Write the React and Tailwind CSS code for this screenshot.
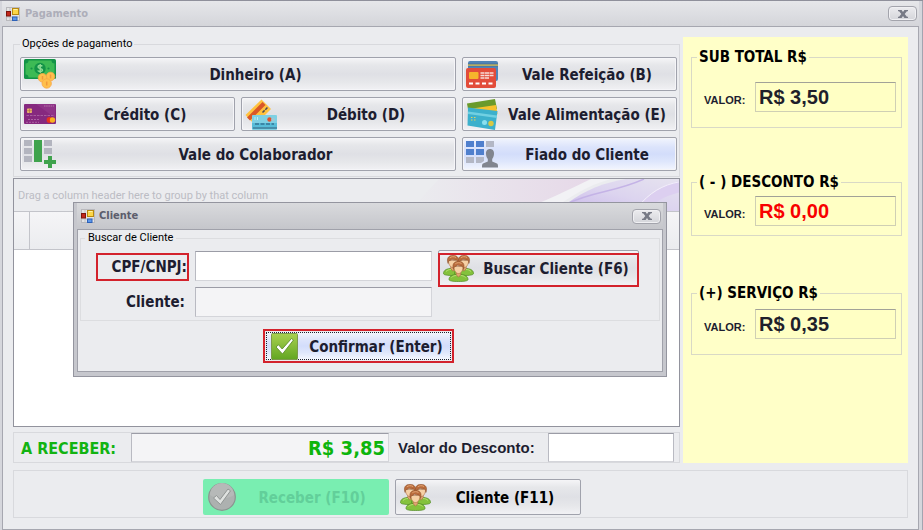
import React from "react";

const UI = "font-['DejaVu_Sans_Condensed','Noto_Sans',sans-serif]";
const SMALL = "font-['Roboto','Noto_Sans',sans-serif]";
const ARIAL = "font-['Liberation_Sans',Arial,sans-serif]";
const FACE =
  "bg-[linear-gradient(to_bottom,#f5f5f7_0%,#e6e7ea_22%,#dfe0e5_50%,#e6e7ea_75%,#f1f1f4_100%)]";
const FACE_BLUE =
  "bg-[linear-gradient(to_bottom,#f2f5fd_0%,#dce4fb_28%,#d3ddfb_50%,#dfe7fc_75%,#f3f6fe_100%)]";
const CAPTION = "flex-1 whitespace-nowrap pl-1 pt-0.5 text-center text-[15px] font-bold leading-5";

function FormIcon() {
  return (
    <svg width="14" height="14" viewBox="0 0 14 14" aria-hidden="true">
      <rect x="0.5" y="0.5" width="13" height="13" fill="#e4e4e4" stroke="#b9b9bd" />
      <path d="M1 10h12M4 1v12" stroke="#bfc0c6" />
      <rect x="0.5" y="4.5" width="4" height="4.5" fill="#c3281c" stroke="#7d150e" />
      <rect x="6.5" y="1.5" width="6" height="6" fill="#fbd648" stroke="#b98a10" />
      <rect x="6.5" y="10" width="4.5" height="3.5" fill="#5d97ea" stroke="#2d61b8" />
      <path d="M7.5 2.5h4" stroke="#fff1a8" />
    </svg>
  );
}

function CloseButton() {
  return (
    <button
      type="button"
      aria-label="Fechar"
      className="flex h-[15px] w-[29px] items-center justify-center rounded-sm border border-[#a3a4ac] bg-linear-to-b from-[#ececef] to-[#d4d5da] shadow-[inset_0_0_0_1px_#f0f0f3]"
    >
      <svg width="10" height="8" viewBox="0 0 10 8" aria-hidden="true">
        <path d="M0 0h3.6l1.4 1.9L6.4 0H10v1.2H8.9L6.7 4l2.2 2.8H10V8H6.4L5 6.1 3.6 8H0V6.8h1.1L3.3 4 1.1 1.2H0z" fill="#777a86" />
      </svg>
    </button>
  );
}

function MoneyIcon() {
  return (
    <svg width="32" height="30" viewBox="0 0 32 30" aria-hidden="true">
      <rect width="32" height="20" rx="1.5" fill="#139347" />
      <path d="M4.500 1.500h23a3 3 0 0 0 3 3v11a3 3 0 0 0-3 3h-23a3 3 0 0 0-3-3v-11a3 3 0 0 0 3-3z" fill="#3dba55" />
      <circle cx="16" cy="9.500" r="5.700" fill="#139347" />
      <path d="M18.300 7.300c-.6-1.100-4.300-1.400-4.300.6 0 2.100 4.500 1 4.500 3.200 0 2-4 1.800-4.800.4M16.200 5v9" fill="none" stroke="#8fdc95" strokeWidth="1.400" />
      <circle cx="7.500" cy="9.500" r="1.100" fill="#139347" />
      <circle cx="24.500" cy="9.500" r="1.100" fill="#139347" />
      <g fill="#ffc04c" stroke="#f7a646" strokeWidth=".8">
        <circle cx="26.500" cy="17.500" r="4.300" />
        <circle cx="18.500" cy="18.800" r="4.300" />
        <circle cx="22.700" cy="24.500" r="4.700" />
      </g>
      <path d="M26.500 15.500v4M18.500 17v3.500M22.700 22.500v4" stroke="#f19a3c" strokeWidth="1.500" />
    </svg>
  );
}

function PurpleCardIcon() {
  return (
    <svg width="32" height="20" viewBox="0 0 32 20" aria-hidden="true">
      <rect width="32" height="20" rx="1" fill="#86297f" />
      <path d="M12 0h19v14z" fill="#8f3488" />
      <rect x="3" y="4.500" width="5" height="4.500" rx=".8" fill="#e9b36d" />
      <path d="M3 6.700h5M5.500 4.500V9" stroke="#a66b3d" strokeWidth=".6" />
      <path d="M20 2h10" stroke="#b675a9" strokeWidth="1.200" strokeDasharray="1.500 .7" />
      <path d="M2.500 11.500h28" stroke="#a75d9f" strokeWidth="1" strokeDasharray="2.500 1" />
      <path d="M4 15.500h12M2 18.300h13" stroke="#b06aa8" strokeWidth=".9" strokeDasharray="2 1" />
      <circle cx="25.500" cy="16" r="2.900" fill="#e6331f" />
      <circle cx="28.500" cy="16" r="2.700" fill="#f9b21f" />
    </svg>
  );
}

function DebitIcon() {
  return (
    <svg width="32" height="31" viewBox="0 0 32 31" aria-hidden="true">
      <path d="M.5 16 16.500.5l9.500 9.500L10 26z" fill="#ffc23f" />
      <path d="M2 18.500 17.500 3l3 3L5 21.500z" fill="#d95728" />
      <path d="m17.500 13.500 5-5" stroke="#4b4a54" strokeWidth="1.500" strokeDasharray="3 1" />
      <rect x="7" y="16" width="25" height="15" rx="1" fill="#7fd0e3" />
      <path d="M7 24h25v6H7z" fill="#57bcd8" />
      <path d="M10 18v3M12.500 18v3" stroke="#b9ecf5" />
      <circle cx="24.500" cy="20.500" r="2.200" fill="#e3502b" />
      <circle cx="28" cy="20.500" r="1.800" fill="#9fc7d4" />
      <path d="M10 25h19" stroke="#225173" strokeWidth="1.200" strokeDasharray="4 1.500" />
      <path d="M8 29h24" stroke="#38607c" />
    </svg>
  );
}

function MealCardIcon() {
  return (
    <svg width="32" height="27" viewBox="0 0 32 27" aria-hidden="true">
      <rect x="2" width="30" height="20" rx="2" fill="#4f84b6" />
      <rect x="2" y="2.500" width="30" height="3" fill="#45719c" />
      <rect x="2" y="3.500" width="30" height="1.200" fill="#e9c94a" />
      <rect y="7" width="30" height="20" rx="2" fill="#e24c3a" />
      <rect x="3" y="11" width="9.500" height="7" rx="1" fill="#f6b52c" />
      <path d="M14.500 12h13M14.500 14.500h13M14.500 17h9" stroke="#f7dcd8" strokeWidth="1.500" strokeDasharray="4 .5" />
      <path d="M3 22.500h24" stroke="#fff" strokeWidth="1.800" strokeDasharray="4 2.500" />
    </svg>
  );
}

function FoodCardIcon() {
  return (
    <svg width="31" height="31" viewBox="0 0 31 31" aria-hidden="true">
      <path d="M0 4.500 28 0l2 10L2 16z" fill="#6a9a2b" />
      <path d="M2 10 29 6l1.500 9L4 19z" fill="#f6c12c" />
      <path d="M1 8.500 30.500 12 28 31 .5 26.500z" fill="#3cb0cc" />
      <path d="m1 12.500 29 4v2.500L1 15z" fill="#71d0e2" />
      <path d="M4 18.500h6M4 21h5" stroke="#e8d15a" strokeWidth="1.200" strokeDasharray="1.500 1.500" />
      <circle cx="17.500" cy="23.500" r="2.500" fill="#8be0ee" />
      <circle cx="24" cy="24.500" r="2.700" fill="#d8c743" />
    </svg>
  );
}

function ColumnPlusIcon() {
  return (
    <svg width="32" height="28" viewBox="0 0 32 28" aria-hidden="true">
      <path d="M0 0h8v6H0zM0 8h8v6H0zM0 16h8v6H0zM20 0h8v6h-8zM20 8h8v6h-8z" fill="#b3b5bf" />
      <path d="M10 0h8v22h-8zM24 16h4v4h4v4h-4v4h-4v-4h-4v-4h4z" fill="#3fa34d" />
    </svg>
  );
}

function GridPersonIcon() {
  return (
    <svg width="32" height="27" viewBox="0 0 32 27" aria-hidden="true">
      <path d="M0 0h8v6H0zM10 0h8v6h-8zM0 8h8v6H0zM10 8h8v6h-8z" fill="#4f7fcd" />
      <path d="M20 0h8v6h-8zM0 16h8v6H0zM10 16h8v4l-3 2h-5z" fill="#b3b7c5" />
      <path d="M24 8c3 0 4.200 2.300 4 5-.1 2-1 4-1.800 5v2.500L31 22.500c1 .6 1 2 1 4H16c0-2 0-3.400 1-4l4.800-2V18c-.9-1-1.700-3-1.800-5-.2-2.700 1-5 4-5z" fill="#81858f" />
    </svg>
  );
}

function Person({ x, y }) {
  return (
    <g transform={`translate(${x} ${y})`}>
      <path d="M0 18.500c0-3 2.500-4.500 6.500-5h6c4 .5 6.500 2 6.500 5 0 1.500-4 2-9.500 2S0 20 0 18.500z" fill="#84c23c" stroke="#4f8a22" strokeWidth=".7" />
      <path d="M2.500 16.500c1.500-1.500 3-2 5-2M11.500 14.500c2 0 3.500.5 5 2" fill="none" stroke="#b6e070" />
      <path d="M7.200 10.500h4.600v3.200l-2.300 2.500-2.300-2.500z" fill="#dfa572" stroke="#9b6437" strokeWidth=".5" />
      <path d="M5 5.500h9c.3 3-1.500 7-4.500 7s-4.800-4-4.500-7z" fill="#f6d0a4" stroke="#a5683a" strokeWidth=".5" />
      <path d="M4.600 8.500C2.500 3 5.500.3 9.500.3s7 2.700 4.900 8.200c-.2-1.800-.7-3-1.400-3.600-1.500.3-3 .1-4.500-.6-.8.9-2.200 1.200-3 1.400-.6.900-.8 1.700-.9 2.800z" fill="#b96c3d" stroke="#874a24" strokeWidth=".5" />
      <path d="M6.300 2.800C8 1.500 10.500 1.300 12.500 2.500" fill="none" stroke="#e3a674" />
    </g>
  );
}

function PeopleIcon() {
  return (
    <svg width="31" height="27" viewBox="0 0 31 27" aria-hidden="true">
      <Person x={0.500} y={0} />
      <Person x={11.500} y={0} />
      <Person x={6} y={6} />
    </svg>
  );
}

function CheckSquareIcon() {
  return (
    <svg width="27" height="27" viewBox="0 0 27 27" aria-hidden="true">
      <defs>
        <linearGradient id="sq" x1="0" y1="0" x2="0" y2="1">
          <stop offset="0" stopColor="#a9d150" />
          <stop offset="1" stopColor="#62a622" />
        </linearGradient>
      </defs>
      <rect x=".5" y=".5" width="26" height="26" rx="1" fill="url(#sq)" stroke="#7d9a4c" />
      <path d="m5 14 2.500-2.200 3.700 4.200L20.500 5.500l2 1.500L11.500 21z" fill="#fff" stroke="#5d8f2c" strokeWidth=".9" />
    </svg>
  );
}

function CheckCircleIcon() {
  return (
    <svg width="28" height="28" viewBox="0 0 28 28" aria-hidden="true">
      <circle cx="14" cy="14" r="13.300" fill="#adb1b0" stroke="#8b9490" strokeWidth="1.200" />
      <path d="M2 12a12 12 0 0 1 24 0c-6 4-17 5-24 0z" fill="#b6b9b8" />
      <path d="m5.500 15 3-2.500 3.500 4L20 6l2.500 1.800L12.500 21.500z" fill="#dfe2e0" stroke="#8a8f8d" strokeWidth=".9" />
    </svg>
  );
}

function PayButton({ icon, label, className = "", active = false }) {
  return (
    <button
      type="button"
      className={`flex h-[34px] items-center rounded-xs border border-[#a0a2ac] pl-[3px] pr-1 shadow-[inset_0_0_0_1px_#f5f5f8] ${active ? FACE_BLUE : FACE} ${className}`}
    >
      <span className="flex w-8 shrink-0 justify-center">{icon}</span>
      <span className={CAPTION}>{label}</span>
    </button>
  );
}

function Total({ legend, value, id, color = "text-[#1f1f2b]", className }) {
  return (
    <fieldset className={`rounded-none border border-[#d9d9c6] pl-3 pr-[5px] ${className}`}>
      <legend className="-ml-[7px] px-0.5 text-[15px] font-bold leading-5 text-black">{legend}</legend>
      <div className={`flex items-center justify-between ${ARIAL}`}>
        <label htmlFor={id} className="pt-1.5 text-[11px] font-bold leading-4">VALOR:</label>
        <input
          id={id}
          readOnly
          defaultValue={value}
          className={`h-[30px] w-[141px] border border-[#cfcfb4] border-t-[#a2a298] bg-[#ffffc4] px-[3px] text-[20px] font-bold outline-none ${color}`}
        />
      </div>
    </fieldset>
  );
}

function Swirl() {
  return (
    <svg className="absolute right-0 top-0 h-full w-[300px]" viewBox="0 0 300 33" preserveAspectRatio="none" aria-hidden="true">
      <defs>
        <linearGradient id="pink" x1="0" x2="1">
          <stop offset="0" stopColor="#ebecef" />
          <stop offset="1" stopColor="#e6d8e8" />
        </linearGradient>
        <linearGradient id="violet" x1="0" y1="1" x2="1" y2="0">
          <stop offset="0" stopColor="#c9b8ea" />
          <stop offset=".5" stopColor="#dcd4ef" />
          <stop offset="1" stopColor="#e6e3ef" />
        </linearGradient>
      </defs>
      <path d="M60 0h155L150 33H30z" fill="url(#pink)" />
      <path d="M170 33C195 17 205 8 232 0h-20c-20 10-50 25-72 33z" fill="#f2f2f5" />
      <path d="M187 26C208 10 225 4 247 0h53v33H180z" fill="url(#violet)" />
      <path d="M187 26C215 12 235 14 265 0" fill="none" stroke="#c4b3e6" strokeWidth="1.500" />
      <path d="M260 28c12-14 24-22 40-26v12c-14 4-24 8-30 19z" fill="#dccff0" />
      <path d="M258 30c12-16 26-24 42-27" fill="none" stroke="#f3effa" />
    </svg>
  );
}

function ClientDialog() {
  return (
    <section
      role="dialog"
      aria-label="Cliente"
      className="absolute left-[73px] top-[201px] w-[594px] border border-[#94959f] bg-[#c6c7cd] px-[3px] pb-1"
    >
      <header className="flex h-[26px] items-center gap-1 bg-linear-to-b from-[#d9dadd] to-[#c5c6cb] pl-1 pr-0.5">
        <FormIcon />
        <h2 className="flex-1 text-[11px] font-bold leading-4 text-[#5c5d6c]">Cliente</h2>
        <CloseButton />
      </header>
      <div className="border border-[#a0a1aa] bg-[#ebecef] px-0.5 pb-2 pt-px">
        <fieldset className="flex border border-[#dcdde0] pb-[3px] pl-2">
          <legend className={`-ml-1 px-[3px] text-[11px] leading-[14px] text-black ${SMALL}`}>Buscar de Cliente</legend>
          <div className="grid flex-1 grid-cols-[100px_237px_201px] gap-x-1.5 gap-y-1.5 pt-1.5">
            <label htmlFor="cpf" className="flex h-7 w-[93px] items-center justify-end self-end justify-self-end border-2 border-[#d3222c] text-[15px] font-bold leading-6">
              CPF/CNPJ:
            </label>
            <input id="cpf" className="h-[30px] border border-[#d4d5da] border-l-[#b9bac2] border-t-[#9b9ca6] bg-white px-1 outline-none" />
            <div className="relative h-[30px]">
              <button
                type="button"
                className={`-mt-px flex h-9 w-full items-center rounded-xs border border-[#a0a2ac] pl-1 pr-1 ${FACE}`}
              >
                <PeopleIcon />
                <span className={CAPTION}>Buscar Cliente (F6)</span>
              </button>
              <span className="pointer-events-none absolute inset-x-0 top-0.5 h-[34px] border-2 border-[#d3222c]" />
            </div>
            <label htmlFor="cli" className="self-center pr-1 text-right text-[15px] font-bold leading-6">Cliente:</label>
            <input id="cli" readOnly className="h-[30px] border border-[#d4d5da] border-l-[#b9bac2] border-t-[#9b9ca6] bg-[#f4f4f6] px-1 outline-none" />
          </div>
        </fieldset>
        <div className="flex pl-[183px] pt-2">
          <div className="border-2 border-[#d3222c] p-px">
            <button
              type="button"
              className={`flex h-7 w-[185px] items-center border border-dotted border-[#20222c] pl-1 ${FACE_BLUE}`}
            >
              <CheckSquareIcon />
              <span className={CAPTION}>Confirmar (Enter)</span>
            </button>
          </div>
        </div>
      </div>
    </section>
  );
}

export default function App() {
  return (
    <div className={`relative flex min-h-screen flex-col border-t border-[#8f909b] bg-[#d5d6dc] pl-0.5 pr-1 text-[#1d1d30] shadow-[inset_-1px_0_0_#a3a4b0] ${UI}`}>
      <header className="flex h-[25px] items-center gap-[5px] bg-linear-to-b from-[#e6e7ea] to-[#d4d5da] pl-1 pr-0.5">
        <FormIcon />
        <h1 className="flex-1 text-[11px] font-bold leading-4 text-[#adaeb9]">Pagamento</h1>
        <CloseButton />
      </header>

      <main className="flex flex-1 flex-col gap-[7px] border border-[#a6a7b0] bg-[#ebecef] px-2.5 pb-[11px] pt-2.5">
        <div className="flex flex-1 gap-[3px]">
          <div className="flex min-w-0 flex-1 flex-col">
            <fieldset className="border border-[#d8d9dd] pb-[5px] pl-1.5 pr-0.5">
              <legend className={`px-0.5 text-[11px] leading-[14px] text-black ${SMALL}`}>Opções de pagamento</legend>
              <div className="grid grid-cols-3 gap-1.5 pt-1.5">
                <PayButton className="col-span-2" icon={<MoneyIcon />} label="Dinheiro (A)" />
                <PayButton icon={<MealCardIcon />} label="Vale Refeição (B)" />
                <PayButton icon={<PurpleCardIcon />} label="Crédito (C)" />
                <PayButton icon={<DebitIcon />} label="Débito (D)" />
                <PayButton icon={<FoodCardIcon />} label="Vale Alimentação (E)" />
                <PayButton className="col-span-2" icon={<ColumnPlusIcon />} label="Vale do Colaborador" />
                <PayButton active icon={<GridPersonIcon />} label="Fiado do Cliente" />
              </div>
            </fieldset>

            <div className="mt-px flex flex-1 flex-col border border-[#92939d] bg-white">
              <div className="relative flex h-8 items-center overflow-hidden bg-[#ebecef] pl-1 pt-0.5">
                <Swirl />
                <span className={`relative text-[11px] leading-4 text-[#bbbcc4] ${SMALL}`}>
                  Drag a column header here to group by that column
                </span>
              </div>
              <div className="flex h-[39px] border-y border-[#c3c4ca] bg-linear-to-b from-[#f5f5f7] to-[#ebecef]">
                <div className="w-4 border-r border-[#c3c4ca]" />
              </div>
            </div>

            <div className="mt-[5px] flex items-center border border-[#d8d9dd]">
              <label htmlFor="receber" className="w-[117px] whitespace-nowrap pl-[7px] pt-0.5 text-[16px] font-bold leading-6 text-[#12b312]">A RECEBER:</label>
              <input
                id="receber"
                readOnly
                defaultValue="R$ 3,85"
                className="h-[29px] min-w-0 flex-1 border border-[#d4d5da] border-l-[#b9bac2] border-t-[#9b9ca6] bg-[#f4f4f6] px-[3px] text-right text-[20px] font-bold text-[#0db50d] outline-none"
              />
              <label htmlFor="desconto" className={`w-[159px] whitespace-nowrap pl-[9px] text-[15px] font-bold leading-6 ${ARIAL}`}>Valor do Desconto:</label>
              <input id="desconto" className="mr-[5px] h-[29px] w-[126px] border border-[#b9bac2] border-b-[#d4d5da] border-t-[#9b9ca6] bg-white px-1 outline-none" />
            </div>
          </div>

          <aside className="w-[225px] shrink-0 bg-[#ffffc8] pl-2 pr-1.5 pt-2.5">
            <Total id="sub" legend="SUB TOTAL R$" value="R$ 3,50" className="h-[81px] pt-[15px]" />
            <Total id="desc" legend="( - ) DESCONTO R$" value="R$ 0,00" color="text-[#f80000]" className="mt-11 h-16 pt-1" />
            <Total id="serv" legend="(+) SERVIÇO R$" value="R$ 0,35" className="mt-[47px] h-[72px] pt-1.5" />
          </aside>
        </div>

        <div className="flex justify-center gap-1.5 border border-[#d8d9dd] pb-0.5 pr-[138px] pt-2">
          <button type="button" disabled className="flex h-9 w-[186px] items-center rounded-xs bg-[#79eeb1] pl-[5px] pr-1">
            <CheckCircleIcon />
            <span className={`${CAPTION} text-[#62cf9a]`}>Receber (F10)</span>
          </button>
          <button type="button" className={`flex h-9 w-[186px] items-center rounded-xs border border-[#a0a2ac] pl-1 pr-1 text-black ${FACE}`}>
            <PeopleIcon />
            <span className={CAPTION}>Cliente (F11)</span>
          </button>
        </div>
      </main>

      <ClientDialog />
    </div>
  );
}
